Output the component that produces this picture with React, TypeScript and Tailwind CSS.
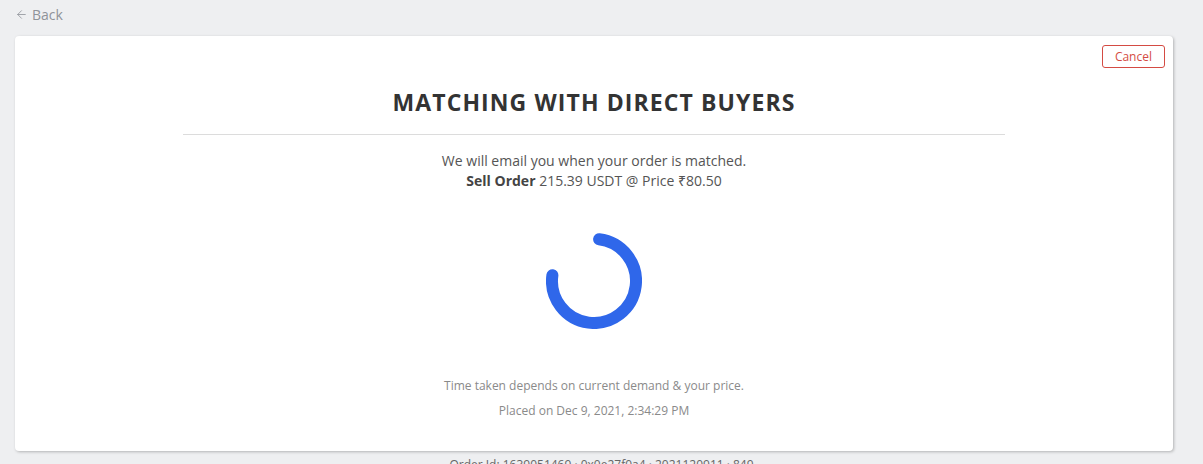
import { ArrowLeft } from "lucide-react";

export default function App() {
  return (
    <div
      className="min-h-[464px] w-full bg-[#eeeff1] overflow-hidden"
      style={{ fontFamily: '"Open Sans", "Noto Sans", sans-serif' }}
    >
      <div className="flex items-center h-[29px] pl-[15px] text-[14px] text-[#8f9399]">
        <ArrowLeft size={13} strokeWidth={1.5} className="mr-[4px]" />
        <span>Back</span>
      </div>
      <div className="ml-[15px] mr-[30px] mt-[7px] h-[415px] bg-white rounded-[4px] shadow-[1px_1px_3px_rgba(0,0,0,0.25)] flex flex-col items-center">
        <div className="w-full flex justify-end pt-[9px] pr-[8px]">
          <button className="h-[23px] px-[12px] border border-[#d44b43] rounded-[3px] text-[12px] leading-none text-[#d44b43]">
            Cancel
          </button>
        </div>
        <h1 className="mt-[19px] text-[23px] leading-[30px] font-bold tracking-[1.1px] text-[#333333]">
          MATCHING WITH DIRECT BUYERS
        </h1>
        <div className="w-[822px] h-px bg-[#dcdcdc] mt-[17px]" />
        <p className="mt-[16px] text-[14px] leading-[20px] text-[#555555] text-center">
          We will email you when your order is matched.
          <br />
          <span className="font-bold text-[#444444]">Sell Order</span> 215.39 USDT @ Price ₹80.50
        </p>
        <svg className="mt-[42px]" width="96" height="96" viewBox="0 0 96 96">
          <path
            d="M 53.1 6.3 A 42 42 0 1 1 6.4 42.2"
            fill="none"
            stroke="#2f67ea"
            strokeWidth="12"
            strokeLinecap="round"
          />
        </svg>
        <p className="mt-[49px] text-[12px] leading-[16px] text-[#8a8a8a]">
          Time taken depends on current demand &amp; your price.
        </p>
        <p className="mt-[9px] text-[12px] leading-[16px] text-[#8a8a8a]">
          Placed on Dec 9, 2021, 2:34:29 PM
        </p>
      </div>
      <p className="mt-[5px] text-center text-[12px] text-[#666666]">
        Order Id: 1639051469 · 0x0e27f0a4 · 2021120911 · 849
      </p>
    </div>
  );
}
